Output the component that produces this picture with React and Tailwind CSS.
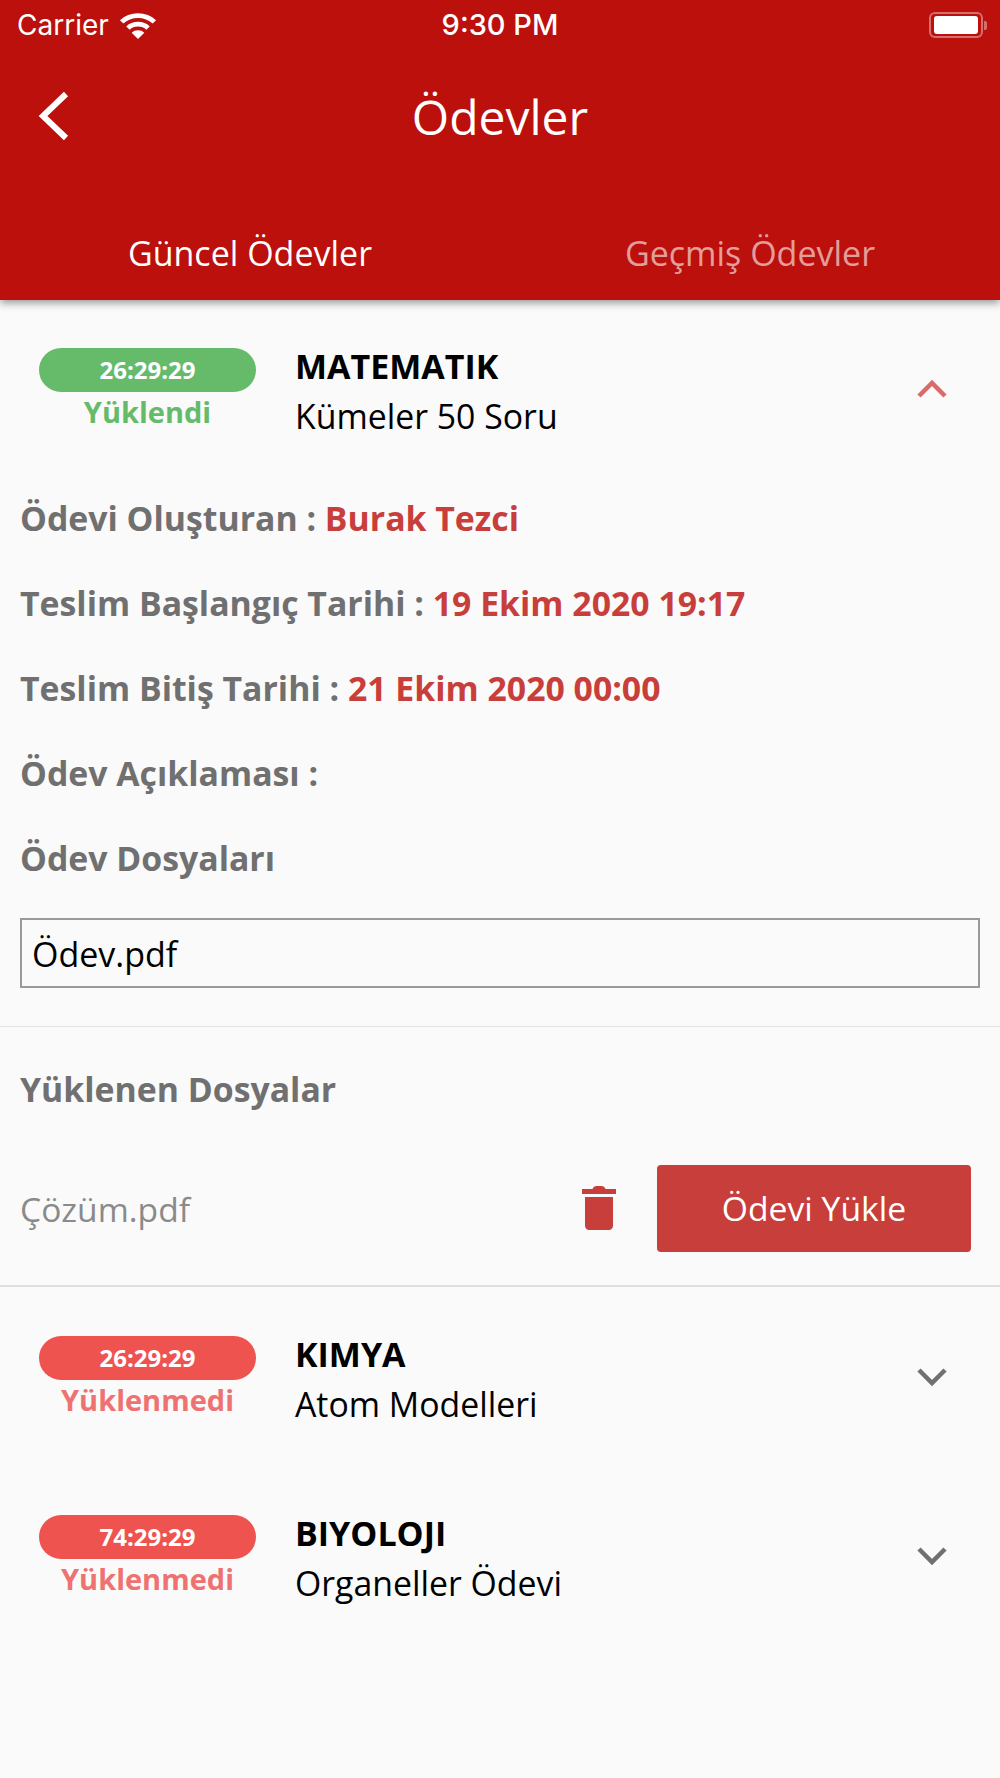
import React from 'react';

const OPEN = "font-['Open_Sans',sans-serif]";

function Wifi() {
  return (
    <svg width="38" height="27" viewBox="0 0 36 26" preserveAspectRatio="none" fill="none" stroke="white" strokeWidth="4.6">
      <path d="M2.5 9.5C11 1.5 25 1.5 33.5 9.5" />
      <path d="M8.5 15.5C13.5 10.5 22.5 10.5 27.5 15.5" />
      <path d="M18 26L12 20C15 16.8 21 16.8 24 20Z" fill="white" stroke="none" />
    </svg>
  );
}

function Battery() {
  return (
    <div className="flex items-center">
      <div className="w-[54px] h-[26px] rounded-[6px] border-2 border-white/40 px-[3px] py-[2px]">
        <div className="w-full h-full rounded-[3px] bg-white" />
      </div>
      <div className="w-[3px] h-[9px] bg-white/40 rounded-r-[2px] ml-[1px]" />
    </div>
  );
}

function Chevron({ up, color }) {
  return (
    <svg className="mb-[2px]" width="30" height="20" viewBox="0 0 30 20" fill="none" stroke={color} strokeWidth="4.5">
      <path d={up ? 'M2 17L15 4L28 17' : 'M2 3L15 16L28 3'} />
    </svg>
  );
}

function TaskRow({ time, status, ok, title, sub, open, className }) {
  return (
    <div className={`flex items-center h-[100px] pl-[39px] pr-[53px] ${className}`}>
      <div className="w-[217px] flex flex-col items-center shrink-0">
        <div className={`w-full h-[44px] rounded-full flex items-center justify-center text-white font-bold text-[24px] ${ok ? 'bg-[#66bb6a]' : 'bg-[#ef5350]'}`}>
          {time}
        </div>
        <div className={`font-bold text-[29px] leading-[40px] ${ok ? 'text-[#66bb6a]' : 'text-[#ef7272]'}`}>{status}</div>
      </div>
      <div className="ml-[39px] flex-1 pt-[4px]">
        <div className="font-bold text-[34px] leading-[48px] text-black">{title}</div>
        <div className="text-[33.8px] leading-[52px] text-black">{sub}</div>
      </div>
      <Chevron up={open} color={open ? '#d96b6b' : '#707070'} />
    </div>
  );
}

function Detail({ label, value }) {
  return (
    <div className="h-[85px] flex items-center font-bold text-[33.8px] text-[#707070] whitespace-pre">
      {label}
      {value && <span className="text-[#c83e3b]">{value}</span>}
    </div>
  );
}

export default function App() {
  return (
    <div className={`w-[1000px] h-[1778px] overflow-hidden bg-[#fafafa] ${OPEN}`}>
      <div className="relative z-10 h-[300px] bg-[#bb100b] shadow-[0_3px_8px_rgba(0,0,0,0.4)] text-white">
        <div className="h-[50px] relative flex items-center justify-between pl-[17px] pr-[13px] font-['Inter',sans-serif] text-[28px]">
          <div className="flex items-center gap-[10px]">
            <span>Carrier</span>
            <Wifi />
          </div>
          <div className="absolute inset-x-0 text-center font-medium text-[29px]">9:30 PM</div>
          <Battery />
        </div>
        <div className="h-[134px] relative flex items-center justify-center text-[48px]">
          <svg className="absolute left-[38px] top-[41px]" width="32" height="50" viewBox="0 0 32 50" fill="none" stroke="white" strokeWidth="6">
            <path d="M28 3L5 25L28 47" />
          </svg>
          Ödevler
        </div>
        <div className="flex text-[34px] pt-[44px]">
          <div className="w-1/2 text-center">Güncel Ödevler</div>
          <div className="w-1/2 text-center text-white/60">Geçmiş Ödevler</div>
        </div>
      </div>

      <TaskRow className="mt-[40px]" time="26:29:29" status="Yüklendi" ok title="MATEMATIK" sub="Kümeler 50 Soru" open />

      <div className="px-[20px] mt-[36px]">
        <Detail label="Ödevi Oluşturan : " value="Burak Tezci" />
        <Detail label="Teslim Başlangıç Tarihi : " value="19 Ekim 2020 19:17" />
        <Detail label="Teslim Bitiş Tarihi : " value="21 Ekim 2020 00:00" />
        <Detail label="Ödev Açıklaması :" />
        <Detail label="Ödev Dosyaları" />
        <div className="mt-[17px] h-[70px] border-2 border-[#9a9a9a] flex items-center px-[10px] pt-[2px] text-[34px] text-black">Ödev.pdf</div>
      </div>

      <div className="h-px bg-[#e4e4e4] mt-[38px]" />

      <div className="px-[20px] pt-[20px]">
        <div className="h-[85px] flex items-center font-bold text-[33.8px] text-[#707070]">Yüklenen Dosyalar</div>
        <div className="mt-[33px] flex items-center">
          <span className="flex-1 pt-[2px] text-[33.6px] text-[#8a8a8a]">Çözüm.pdf</span>
          <svg className="mb-[2px]" width="34" height="44" viewBox="0 0 34 44" fill="#c83e3b">
            <path d="M0 3H10.5C11 1 13 0 14.5 0H19.5C21 0 23 1 23.5 3H34V8H0Z" />
            <path d="M3 11H31V40C31 42 29 44 27 44H7C5 44 3 42 3 40Z" />
          </svg>
          <button className="ml-[41px] mr-[9px] w-[314px] h-[87px] bg-[#c83e3b] rounded-[4px] text-white text-[33.7px]">Ödevi Yükle</button>
        </div>
      </div>

      <div className="h-[2px] bg-[#e0e0e0] mt-[33px]" />

      <TaskRow className="mt-[41px]" time="26:29:29" status="Yüklenmedi" title="KIMYA" sub="Atom Modelleri" />
      <TaskRow className="mt-[79px]" time="74:29:29" status="Yüklenmedi" title="BIYOLOJI" sub="Organeller Ödevi" />
    </div>
  );
}
